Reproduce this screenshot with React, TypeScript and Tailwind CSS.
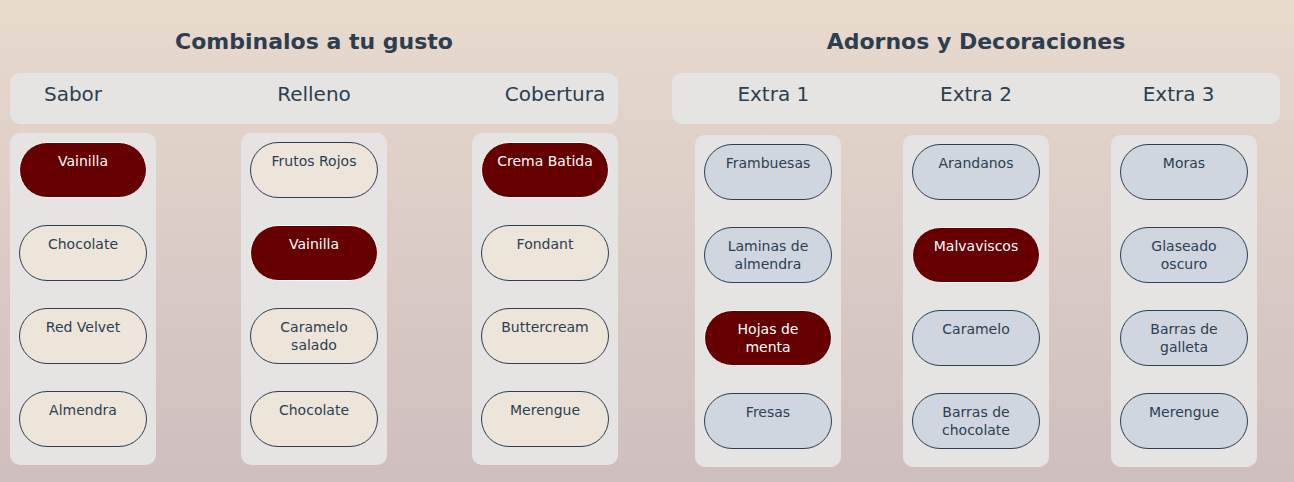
import { useState } from "react";

type Tone = "cream" | "blue";

interface ColumnData {
  title: string;
  options: string[];
  initial: number;
}

const flavours: ColumnData[] = [
  { title: "Sabor", options: ["Vainilla", "Chocolate", "Red Velvet", "Almendra"], initial: 0 },
  { title: "Relleno", options: ["Frutos Rojos", "Vainilla", "Caramelo salado", "Chocolate"], initial: 1 },
  { title: "Cobertura", options: ["Crema Batida", "Fondant", "Buttercream", "Merengue"], initial: 0 },
];

const extras: ColumnData[] = [
  { title: "Extra 1", options: ["Frambuesas", "Laminas de almendra", "Hojas de menta", "Fresas"], initial: 2 },
  { title: "Extra 2", options: ["Arandanos", "Malvaviscos", "Caramelo", "Barras de chocolate"], initial: 1 },
  { title: "Extra 3", options: ["Moras", "Glaseado oscuro", "Barras de galleta", "Merengue"], initial: -1 },
];

const toneClass: Record<Tone, string> = {
  cream: "border-[#2c3e50] bg-[#ede5da] text-[#2c3e50]",
  blue: "border-[#2c3e50] bg-[#cfd6e0] text-[#2c3e50]",
};

function OptionColumn({ column, tone }: { column: ColumnData; tone: Tone }) {
  const [selected, setSelected] = useState(column.initial);
  return (
    <div
      role="group"
      aria-label={column.title}
      className="flex w-[146px] flex-col items-center gap-[27px] rounded-[10px] bg-[#e5e4e2] px-[9px] pt-[9px] pb-[18px]"
    >
      {column.options.map((option, i) => (
        <button
          key={option}
          type="button"
          aria-pressed={selected === i}
          onClick={() => setSelected(i)}
          className={`flex h-14 w-full items-start justify-center rounded-full border px-3 pt-[9px] text-center text-[14px] leading-[18px] ${
            selected === i ? "border-white bg-[#660000] text-white" : toneClass[tone]
          }`}
        >
          {option}
        </button>
      ))}
    </div>
  );
}

export default function App() {
  return (
    <main className="grid min-h-screen grid-cols-2 items-start gap-[54px] bg-linear-to-b from-[#e8dacd] to-[#cebebe] pt-7 pr-[14px] pb-[15px] pl-[10px] font-['DejaVu_Sans',sans-serif] text-[#2c3e50]">
      <section>
        <h2 className="text-center text-[22px] leading-7 font-bold">Combinalos a tu gusto</h2>
        <div className="mt-[17px] flex h-[51px] justify-between rounded-[10px] bg-[#e5e4e2] pt-2 text-center text-[20px] leading-[26px]">
          {flavours.map((c) => (
            <h3 key={c.title} className="w-[126px]">{c.title}</h3>
          ))}
        </div>
        <div className="mt-[9px] flex justify-between">
          {flavours.map((c) => (
            <OptionColumn key={c.title} column={c} tone="cream" />
          ))}
        </div>
      </section>
      <section>
        <h2 className="text-center text-[22px] leading-7 font-bold">Adornos y Decoraciones</h2>
        <div className="mt-[17px] grid h-[51px] grid-cols-3 rounded-[10px] bg-[#e5e4e2] pt-2 text-center text-[20px] leading-[26px]">
          {extras.map((c) => (
            <h3 key={c.title}>{c.title}</h3>
          ))}
        </div>
        <div className="mt-[11px] flex justify-between px-[23px]">
          {extras.map((c) => (
            <OptionColumn key={c.title} column={c} tone="blue" />
          ))}
        </div>
      </section>
    </main>
  );
}
